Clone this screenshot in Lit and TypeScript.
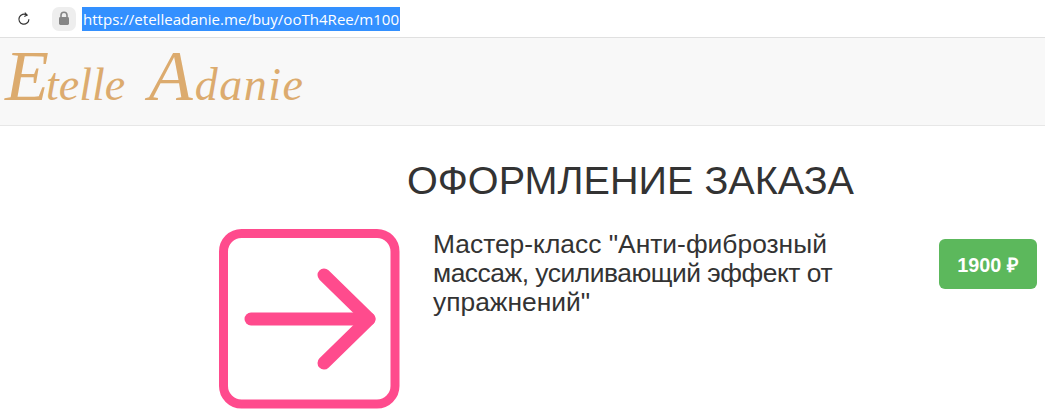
import { LitElement, html, css } from "lit";
import { customElement } from "lit/decorators.js";

@customElement("app-root")
export class AppRoot extends LitElement {
  static styles = css`
    :host { display: block; width: 1045px; height: 420px; overflow: hidden; background: #fff; font-family: "Liberation Sans", Arial, sans-serif; color: #333; }
    .addr { box-sizing: border-box; border-bottom: 1px solid #e0e0e0; display: flex; align-items: center; height: 38px; padding-left: 17px; background: #fff; }
    .reload { width: 14px; height: 14px; display: block; margin-right: 21px; }
    .lock { width: 24px; height: 24px; border-radius: 7px; background: #eeeeee; display: flex; align-items: center; justify-content: center; margin-right: 6px; }
    .lock svg { display: block; }
    .url { font-family: "Open Sans", sans-serif; font-size: 15.05px; line-height: 24px; height: 24px; background: #3390ff; color: #fff; padding: 0 1px; white-space: nowrap; }
    .nav { height: 88px; box-sizing: border-box; background: #f8f8f8; border-bottom: 1px solid #e7e7e7; display: flex; align-items: center; padding: 0 0 0 5px; }
    .logo { font-family: "Liberation Serif", serif; font-style: italic; font-size: 46px; line-height: 70px; white-space: nowrap; color: #dcab6e; padding-top: 6px; }
    .cap { font-size: 72px; line-height: 0; }
    .cap.e { margin-right: -3px; }
    .cap.a { margin-left: 12px; margin-right: 2px; }
    .tail { letter-spacing: 1.5px; }
    h1 { margin: 0; font-weight: 400; font-size: 39.6px; line-height: 44px; text-align: center; padding: 32px 0 0 216px; color: #333; }
    .row { display: flex; align-items: flex-start; padding: 27px 8px 0 219px; }
    .art { width: 184px; height: 184px; display: block; flex: none; }
    .title { margin: 0; padding: 1px 0 0 30px; width: 460px; box-sizing: border-box; font-weight: 400; font-size: 26.4px; line-height: 29px; color: #333; flex: none; }
    .tight { letter-spacing: -0.48px; }
    .price { margin: 10px 0 0 auto; width: 98px; height: 50px; border-radius: 6px; background: #5cb85c; color: #fff; font-weight: 700; font-size: 19.8px; display: flex; align-items: center; justify-content: center; white-space: nowrap; }
  `;

  render() {
    return html`
      <div class="addr">
        <svg class="reload" viewBox="0 0 14 14" fill="none" stroke="#333" stroke-width="1.2">
          <path d="M11.9 7.2a5 5 0 1 1-2.1-4.1"/>
          <path d="M7.8 0.6l2.4 2.5-2.9 1.4" stroke-width="1.1"/>
        </svg>
        <div class="lock">
          <svg width="12" height="15" viewBox="0 0 12 15">
            <path d="M3 6V4.2a3 3 0 0 1 6 0V6" fill="none" stroke="#868686" stroke-width="1.6"/>
            <rect x="1" y="6" width="10" height="8" rx="1.4" fill="#868686"/>
          </svg>
        </div>
        <div class="url">https://etelleadanie.me/buy/ooTh4Ree/m100</div>
      </div>
      <div class="nav"><div class="logo"><span class="cap e">E</span>telle <span class="cap a">A</span><span class="tail">danie</span></div></div>
      <h1>ОФОРМЛЕНИЕ ЗАКАЗА</h1>
      <div class="row">
        <svg class="art" viewBox="0 0 184 184" fill="none" stroke="#ff4b8d" stroke-linecap="round" stroke-linejoin="round">
          <rect x="4.5" y="4.5" width="171.5" height="170.5" rx="18" stroke-width="9"/>
          <path d="M32 90H150" stroke-width="13"/>
          <path d="M105 46L150 90L105 134" stroke-width="13"/>
        </svg>
        <h3 class="title">Мастер-класс "Анти-фиброзный <span class="tight">массаж, усиливающий эффект от</span> упражнений"</h3>
        <div class="price">1900 ₽</div>
      </div>
    `;
  }
}
